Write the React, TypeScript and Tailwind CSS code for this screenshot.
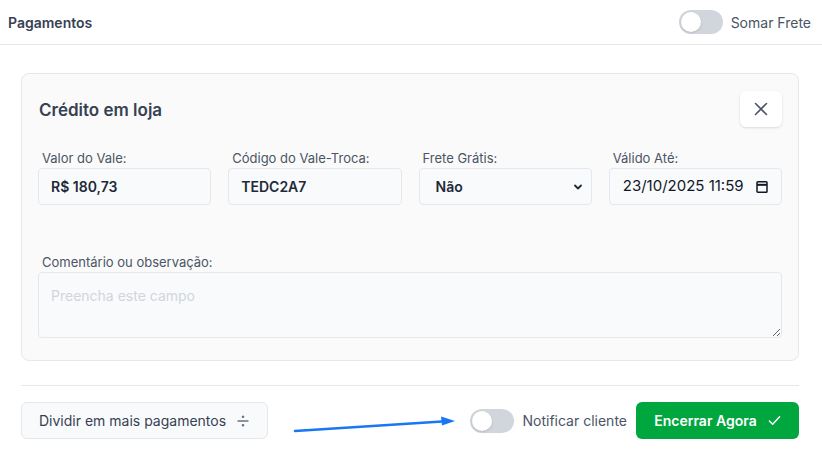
import React from "react";

const Toggle = () => (
  <div className="w-[44px] h-[24px] rounded-full bg-gray-300 p-[2px] flex items-center">
    <div className="w-[20px] h-[20px] rounded-full bg-white shadow" />
  </div>
);

const Field = ({ label, children }: { label: string; children: React.ReactNode }) => (
  <div className="flex flex-col">
    <span className="pl-1 mb-[1px] text-[13px] leading-[18px] text-gray-600">{label}</span>
    {children}
  </div>
);

export default function App() {
  return (
    <div
      className="relative w-[822px] h-[455px] bg-white text-gray-700"
      style={{ fontFamily: "Inter, 'Noto Sans', sans-serif" }}
    >
      <div className="h-[45px] flex items-center justify-between pl-2 pr-[11px] border-b border-gray-200">
        <span className="text-[14px] font-semibold text-gray-700">Pagamentos</span>
        <div className="flex items-center gap-2">
          <Toggle />
          <span className="text-[14px] text-gray-600">Somar Frete</span>
        </div>
      </div>

      <div className="pl-[21px] pr-[23px] pt-[28px]">
        <div className="rounded-lg border border-gray-200 bg-[#fafafa] px-4 pt-[17px] pb-[22px]">
          <div className="flex items-center justify-between pl-[1px]">
            <h2 className="text-[17px] font-semibold text-gray-700 mt-[3px]">Crédito em loja</h2>
            <button className="w-[42px] h-[36px] rounded-md bg-white shadow-sm flex items-center justify-center text-gray-600">
              <svg width="14" height="14" viewBox="0 0 14 14" fill="none" stroke="currentColor" strokeWidth="1.6" strokeLinecap="round">
                <path d="M1.5 1.5l11 11M12.5 1.5l-11 11" />
              </svg>
            </button>
          </div>

          <div className="grid grid-cols-4 gap-[17px] mt-[22px]">
            <Field label="Valor do Vale:">
              <div className="h-[37px] rounded border border-gray-200 bg-gray-50 flex items-center px-3 text-[14px] font-semibold text-gray-800">
                R$ 180,73
              </div>
            </Field>
            <Field label="Código do Vale-Troca:">
              <div className="h-[37px] rounded border border-gray-200 bg-gray-50 flex items-center px-3 text-[14px] font-semibold text-gray-800">
                TEDC2A7
              </div>
            </Field>
            <Field label="Frete Grátis:">
              <div className="h-[37px] rounded border border-gray-200 bg-gray-50 flex items-center justify-between pl-4 pr-2 text-[14px] font-semibold text-gray-800">
                <span>Não</span>
                <svg width="10" height="10" viewBox="0 0 10 10" fill="none" stroke="currentColor" strokeWidth="1.8" strokeLinecap="round" strokeLinejoin="round">
                  <path d="M2 3.5l3 3 3-3" />
                </svg>
              </div>
            </Field>
            <Field label="Válido Até:">
              <div className="h-[37px] rounded border border-gray-200 bg-gray-50 flex items-center justify-between pl-[13px] pr-[13px] text-[15px] text-gray-900">
                <span>23/10/2025 11:59</span>
                <svg width="12" height="13" viewBox="0 0 12 13" fill="none" stroke="currentColor" strokeWidth="1.5">
                  <rect x="1" y="1.8" width="10" height="10.4" rx="0.8" />
                  <path d="M1 4.8h10" strokeWidth="2" />
                </svg>
              </div>
            </Field>
          </div>

          <div className="mt-[48px] flex flex-col">
            <span className="pl-1 mb-[1px] text-[13px] leading-[18px] text-gray-600">Comentário ou observação:</span>
            <textarea
              placeholder="Preencha este campo"
              className="h-[66px] rounded border border-gray-200 bg-gray-50 px-3 py-[12px] text-[14px] placeholder:text-gray-300 outline-none"
            />
          </div>
        </div>

        <div className="mt-[24px] border-t border-gray-200" />

        <div className="mt-4 flex items-center justify-between">
          <button className="h-[37px] px-[17px] rounded-md border border-gray-200 bg-gray-50 flex items-center gap-[10px] text-[14px] text-gray-700">
            Dividir em mais pagamentos
            <svg width="14" height="14" viewBox="0 0 14 14" fill="none" stroke="currentColor" strokeWidth="1.4" strokeLinecap="round" className="text-gray-500">
              <path d="M2 7h10" />
              <circle cx="7" cy="2.8" r="0.6" fill="currentColor" />
              <circle cx="7" cy="11.2" r="0.6" fill="currentColor" />
            </svg>
          </button>
          <div className="flex items-center gap-2">
            <Toggle />
            <span className="text-[14px] text-gray-600 mr-[1px]">Notificar cliente</span>
            <button className="h-[37px] w-[163px] rounded-md bg-green-600 text-white text-[14px] font-semibold flex items-center justify-center gap-[11px]">
              Encerrar Agora
              <svg width="13" height="13" viewBox="0 0 14 14" fill="none" stroke="currentColor" strokeWidth="1.6" strokeLinecap="round" strokeLinejoin="round">
                <path d="M1.5 7.5l3.5 3.5 7.5-8" />
              </svg>
            </button>
          </div>
        </div>
      </div>

      <svg className="absolute left-[290px] top-[413px]" width="170" height="24" viewBox="0 0 170 24">
        <path d="M5 18L152 8.5" stroke="#1877f2" strokeWidth="2.5" strokeLinecap="round" />
        <path d="M165 8l-14 -4.5 1 9z" fill="#1877f2" />
      </svg>
    </div>
  );
}
